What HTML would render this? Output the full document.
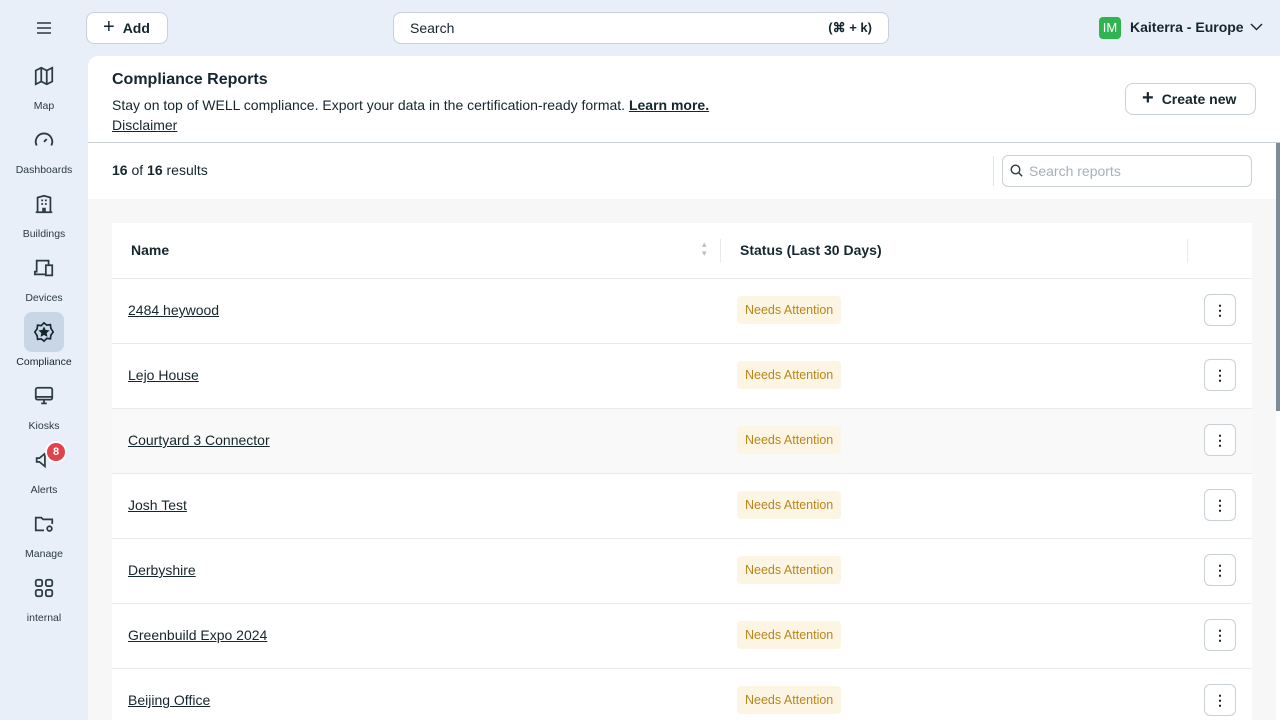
<!DOCTYPE html>
<html><head><meta charset="utf-8"><style>
*{box-sizing:border-box;margin:0;padding:0}
body{width:1280px;height:720px;overflow:hidden;background:#e8eff9;font-family:"Liberation Sans",sans-serif;color:#15262e;position:relative}
.side{position:absolute;left:0;top:0;width:88px;height:720px}
.nav{position:absolute;left:0;width:88px;text-align:center;font-size:10.5px;color:#2c3a42}
.nav svg{display:block;margin:0 auto}
.ic{width:40px;height:40px;margin:0 auto 4px;border-radius:8px;display:flex;align-items:center;justify-content:center}
.btn{position:absolute;background:#fff;border:1px solid #c9d0d6;border-radius:8px;display:flex;align-items:center;font-size:14px;font-weight:bold}
.main{position:absolute;left:88px;top:56px;width:1192px;height:664px;background:#fff;border-top-left-radius:10px;overflow:hidden}
a{color:#15262e}
.row{position:absolute;left:24px;width:1140px;height:65px;border-top:1px solid #e8eaec;background:#fff}
.row a{position:absolute;left:16px;top:23px;font-size:14px}
.tag{position:absolute;left:625px;top:17px;height:28px;padding:0 8px;line-height:28px;background:#fdf5e4;color:#b8861a;font-size:12.5px;border-radius:4px}
.dots{position:absolute;left:1092px;top:15px;width:32px;height:32px;border:1px solid #c9d0d6;border-radius:6px;text-align:center;line-height:30px;font-weight:bold;font-size:14px}
</style></head><body>
<div class="side">
<svg style="position:absolute;left:37px;top:22px" width="14" height="12" viewBox="0 0 14 12"><path d="M0 1h14M0 6h14M0 11h14" stroke="#2c3a42" stroke-width="1.5"/></svg>
<div class="nav" style="top:56px"><div class="ic"><svg width="22" height="22" viewBox="0 0 24 24" fill="none" stroke="#2c3a42" stroke-width="1.9"><path d="M3 6l6-3 6 3 6-3v15l-6 3-6-3-6 3z M9 3v15 M15 6v15"/></svg></div>Map</div>
<div class="nav" style="top:120px"><div class="ic"><svg width="22" height="22" viewBox="0 0 24 24" fill="none" stroke="#2c3a42" stroke-width="2"><path d="M4 18a9 9 0 1 1 16 0"/><path d="M12 14l3-3"/></svg></div>Dashboards</div>
<div class="nav" style="top:184px"><div class="ic"><svg width="22" height="22" viewBox="0 0 24 24" fill="none" stroke="#2c3a42" stroke-width="1.9"><path d="M5 21V5l7-2 7 2v16z M3 21h18 M9 8h2M13 8h2M9 12h2M13 12h2M11 21v-4h2v4"/></svg></div>Buildings</div>
<div class="nav" style="top:248px"><div class="ic"><svg width="22" height="22" viewBox="0 0 24 24" fill="none" stroke="#2c3a42" stroke-width="1.9"><path d="M17 8V4H4v12H2v3h12 M14 9h7v11h-7z"/></svg></div>Devices</div>
<div class="nav" style="top:312px"><div class="ic" style="background:#c8d6e5"><svg width="22" height="22" viewBox="0 0 24 24" fill="none" stroke="#15262e" stroke-width="1.8"><path d="M12 2l3 2.5 4-.5.5 4L22 12l-2.5 3.5-.5 4-4-.5L12 22l-3-2.5-4 .5-.5-4L2 12l2.5-3.5.5-4 4 .5z"/><path d="M12 8l1.2 2.6 2.8.3-2.1 1.9.6 2.8L12 14.2 9.5 15.6l.6-2.8L8 10.9l2.8-.3z" fill="#15262e"/></svg></div><span style="color:#15262e">Compliance</span></div>
<div class="nav" style="top:376px"><div class="ic"><svg width="22" height="22" viewBox="0 0 24 24" fill="none" stroke="#2c3a42" stroke-width="1.9"><rect x="3" y="3" width="18" height="13" rx="2"/><path d="M9 20h6M12 16v4M3 13h18"/></svg></div>Kiosks</div>
<div class="nav" style="top:440px"><div class="ic"><svg width="22" height="22" viewBox="0 0 24 24" fill="none" stroke="#2c3a42" stroke-width="1.9"><path d="M4 10h3l6-5v14l-6-5H4z"/></svg></div>Alerts</div>
<div style="position:absolute;left:45px;top:441px;width:22px;height:22px;border-radius:50%;background:#e0434b;border:2px solid #fff;color:#fff;font-size:11px;font-weight:bold;text-align:center;line-height:18px">8</div>
<div class="nav" style="top:504px"><div class="ic"><svg width="22" height="22" viewBox="0 0 24 24" fill="none" stroke="#2c3a42" stroke-width="1.9"><path d="M12 19H3V5h6l2 2h10v5"/><circle cx="18" cy="17" r="2.5"/></svg></div>Manage</div>
<div class="nav" style="top:568px"><div class="ic"><svg width="22" height="22" viewBox="0 0 24 24" fill="none" stroke="#2c3a42" stroke-width="1.9"><rect x="3" y="3" width="7" height="7" rx="2"/><rect x="14" y="3" width="7" height="7" rx="2"/><rect x="3" y="14" width="7" height="7" rx="2"/><rect x="14" y="14" width="7" height="7" rx="2"/></svg></div>internal</div>
</div>
<div class="btn" style="left:86px;top:12px;width:82px;height:32px;padding-left:16px"><span style="font-weight:normal;font-size:20px;margin-right:8px;margin-top:-2px">+</span>Add</div>
<div class="btn" style="left:393px;top:12px;width:496px;height:32px;padding:0 16px;justify-content:space-between;font-weight:normal"><span>Search</span><span style="font-size:13px;font-weight:bold">(⌘ + k)</span></div>
<div style="position:absolute;left:1099px;top:17px;width:22px;height:22px;background:#2fb44f;border-radius:4px;color:#fff;font-size:13px;text-align:center;line-height:22px">IM</div>
<div style="position:absolute;left:1130px;top:19px;font-size:14px;font-weight:bold;white-space:nowrap">Kaiterra - Europe</div>
<svg style="position:absolute;left:1250px;top:23px" width="13" height="8" viewBox="0 0 13 8"><path d="M1 1l5.5 5.5L12 1" stroke="#15262e" fill="none" stroke-width="1.4"/></svg>
<div class="main">
<div style="position:absolute;left:24px;top:15px;font-size:16px;font-weight:bold">Compliance Reports</div>
<div style="position:absolute;left:24px;top:39px;font-size:14px;line-height:20px">Stay on top of WELL compliance. Export your data in the certification-ready format. <a href="#" style="font-weight:bold">Learn more.</a><br><a href="#">Disclaimer</a></div>
<div class="btn" style="left:1037px;top:27px;width:131px;height:32px;padding-left:16px"><span style="font-size:20px;margin-right:8px;margin-top:-2px">+</span>Create new</div>
<div style="position:absolute;left:0;top:86px;width:1192px;border-top:1px solid #c9d0d6"></div>
<div style="position:absolute;left:24px;top:106px;font-size:14px"><b>16</b> of <b>16</b> results</div>
<div style="position:absolute;left:905px;top:100px;height:30px;border-left:1px solid #e0e3e6"></div>
<div style="position:absolute;left:914px;top:99px;width:250px;height:32px;border:1px solid #c9d0d6;border-radius:6px;font-size:14px;color:#a8b0b6;padding:7px 0 0 26px">Search reports</div>
<svg style="position:absolute;left:922px;top:108px" width="13" height="13" viewBox="0 0 13 13" fill="none" stroke="#2c3a42" stroke-width="1.4"><circle cx="5.5" cy="5.5" r="4.3"/><path d="M8.7 8.7l3.5 3.5"/></svg>
<div style="position:absolute;left:1188px;top:87px;width:4px;height:268px;background:#7e8c98"></div>
<div style="position:absolute;left:0;top:143px;width:1188px;height:521px;background:#f7f7f8">
<div style="position:absolute;left:24px;top:24px;width:1140px;height:55px;background:#fff">
<div style="position:absolute;left:19px;top:19px;font-size:14px;font-weight:bold">Name</div>
<div style="position:absolute;left:590px;top:17px;font-size:9px;color:#b8bec3;line-height:9px">▴<br>▾</div>
<div style="position:absolute;left:608px;top:16px;height:24px;border-left:1px solid #e8eaec"></div>
<div style="position:absolute;left:628px;top:19px;font-size:14px;font-weight:bold">Status (Last 30 Days)</div>
<div style="position:absolute;left:1075px;top:16px;height:24px;border-left:1px solid #e8eaec"></div>
</div>
<div class="row" style="top:79px"><a href="#">2484 heywood</a><span class="tag">Needs Attention</span><span class="dots">⋮</span></div>
<div class="row" style="top:144px"><a href="#">Lejo House</a><span class="tag">Needs Attention</span><span class="dots">⋮</span></div>
<div class="row" style="top:209px;background:#f9f9f9"><a href="#">Courtyard 3 Connector</a><span class="tag">Needs Attention</span><span class="dots" style="background:#fff">⋮</span></div>
<div class="row" style="top:274px"><a href="#">Josh Test</a><span class="tag">Needs Attention</span><span class="dots">⋮</span></div>
<div class="row" style="top:339px"><a href="#">Derbyshire</a><span class="tag">Needs Attention</span><span class="dots">⋮</span></div>
<div class="row" style="top:404px"><a href="#">Greenbuild Expo 2024</a><span class="tag">Needs Attention</span><span class="dots">⋮</span></div>
<div class="row" style="top:469px"><a href="#">Beijing Office</a><span class="tag">Needs Attention</span><span class="dots">⋮</span></div>
</div>
</div>
</body></html>
